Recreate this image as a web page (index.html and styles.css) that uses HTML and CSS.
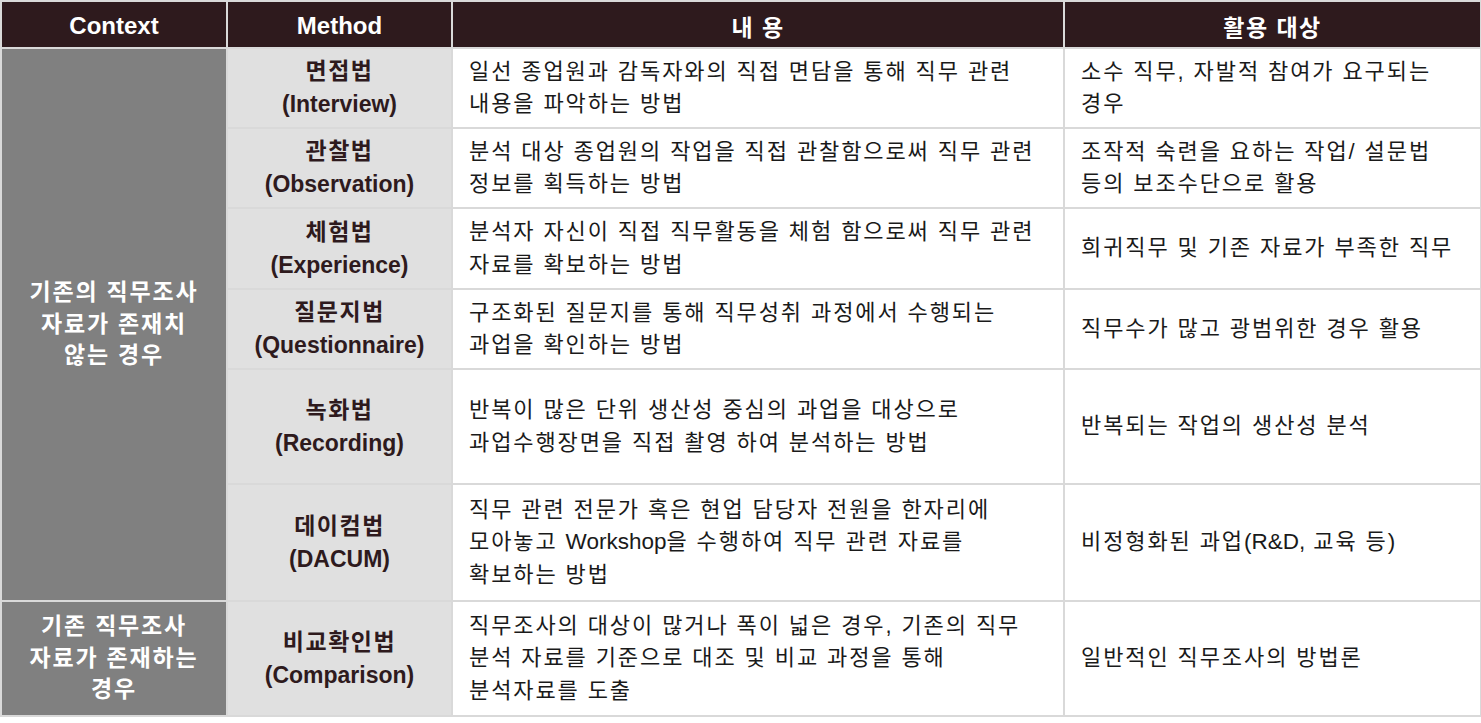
FILE: index.html
```html
<!DOCTYPE html>
<html lang="ko">
<head>
<meta charset="utf-8">
<title>직무조사 방법</title>
<link rel="stylesheet" href="styles.css">
</head>
<body>
<table class="grid">
  <colgroup>
    <col class="c-context">
    <col class="c-method">
    <col class="c-content">
    <col class="c-target">
  </colgroup>
  <thead>
    <tr class="head">
      <th>Context</th>
      <th>Method</th>
      <th class="ko">내 용</th>
      <th class="ko">활용 대상</th>
    </tr>
  </thead>
  <tbody>
    <tr class="r1">
      <td class="ctx" rowspan="6">기존의 직무조사<br>자료가 존재치<br>않는 경우</td>
      <td class="method"><span class="ko">면접법</span><br>(Interview)</td>
      <td class="text">일선 종업원과 감독자와의 직접 면담을 통해 직무 관련<br>내용을 파악하는 방법</td>
      <td class="text">소수 직무, 자발적 참여가 요구되는<br>경우</td>
    </tr>
    <tr class="r2">
      <td class="method"><span class="ko">관찰법</span><br>(Observation)</td>
      <td class="text">분석 대상 종업원의 작업을 직접 관찰함으로써 직무 관련<br>정보를 획득하는 방법</td>
      <td class="text">조작적 숙련을 요하는 작업/ 설문법<br>등의 보조수단으로 활용</td>
    </tr>
    <tr class="r3">
      <td class="method"><span class="ko">체험법</span><br>(Experience)</td>
      <td class="text">분석자 자신이 직접 직무활동을 체험 함으로써 직무 관련<br>자료를 확보하는 방법</td>
      <td class="text">희귀직무 및 기존 자료가 부족한 직무</td>
    </tr>
    <tr class="r4">
      <td class="method"><span class="ko">질문지법</span><br>(Questionnaire)</td>
      <td class="text">구조화된 질문지를 통해 직무성취 과정에서 수행되는<br>과업을 확인하는 방법</td>
      <td class="text">직무수가 많고 광범위한 경우 활용</td>
    </tr>
    <tr class="r5">
      <td class="method"><span class="ko">녹화법</span><br>(Recording)</td>
      <td class="text">반복이 많은 단위 생산성 중심의 과업을 대상으로<br>과업수행장면을 직접 촬영 하여 분석하는 방법</td>
      <td class="text">반복되는 작업의 생산성 분석</td>
    </tr>
    <tr class="r6">
      <td class="method"><span class="ko">데이컴법</span><br>(DACUM)</td>
      <td class="text">직무 관련 전문가 혹은 현업 담당자 전원을 한자리에<br>모아놓고 <span class="latin">Workshop</span>을 수행하여 직무 관련 자료를<br>확보하는 방법</td>
      <td class="text">비정형화된 과업<span class="latin">(R&amp;D,</span> 교육 등<span class="latin">)</span></td>
    </tr>
    <tr class="r7">
      <td class="ctx">기존 직무조사<br>자료가 존재하는<br>경우</td>
      <td class="method"><span class="ko">비교확인법</span><br>(Comparison)</td>
      <td class="text">직무조사의 대상이 많거나 폭이 넓은 경우, 기존의 직무<br>분석 자료를 기준으로 대조 및 비교 과정을 통해<br>분석자료를 도출</td>
      <td class="text">일반적인 직무조사의 방법론</td>
    </tr>
  </tbody>
</table>
</body>
</html>
```

FILE: styles.css
```css
html, body {
  margin: 0;
  padding: 0;
  background: #ffffff;
}

body {
  font-family: "Liberation Sans", "Noto Sans CJK KR", sans-serif;
}

.grid {
  border-collapse: collapse;
  table-layout: fixed;
  width: 1480px;
}

.c-context { width: 226px; }
.c-method { width: 225px; }
.c-content { width: 612px; }
.c-target { width: 417px; }

.grid th,
.grid td {
  border: 2px solid #d9d9d9;
  padding: 0;
}

.grid .head th {
  height: 43px;
  padding-top: 2px;
  background: #2e1a1d;
  color: #ffffff;
  font-size: 24px;
  font-weight: bold;
  text-align: center;
  vertical-align: middle;
}

.grid .head .ko {
  font-size: 23px;
  letter-spacing: 1.5px;
}

.grid .ctx {
  background: #808080;
  color: #ffffff;
  font-size: 23px;
  font-weight: bold;
  line-height: 31.5px;
  text-align: center;
  vertical-align: middle;
  letter-spacing: 1.8px;
}

.grid .method {
  background: #e0e0e0;
  color: #2e1a1d;
  font-size: 23px;
  font-weight: bold;
  line-height: 33px;
  text-align: center;
  vertical-align: middle;
}

.method .ko {
  letter-spacing: 1.5px;
}

.grid .text {
  background: #ffffff;
  color: #1a1a1a;
  font-size: 22px;
  line-height: 32.5px;
  letter-spacing: 1.9px;
  padding: 0 6px 0 16px;
  vertical-align: middle;
  white-space: nowrap;
}

.text .latin {
  font-size: 22.5px;
  letter-spacing: 0;
}

.r1 td { height: 78px; }
.r2 td { height: 78px; }
.r3 td { height: 79px; }
.r4 td { height: 78px; }
.r5 td { height: 113px; }
.r6 td { height: 115px; }
.r7 td { height: 113px; }
```
